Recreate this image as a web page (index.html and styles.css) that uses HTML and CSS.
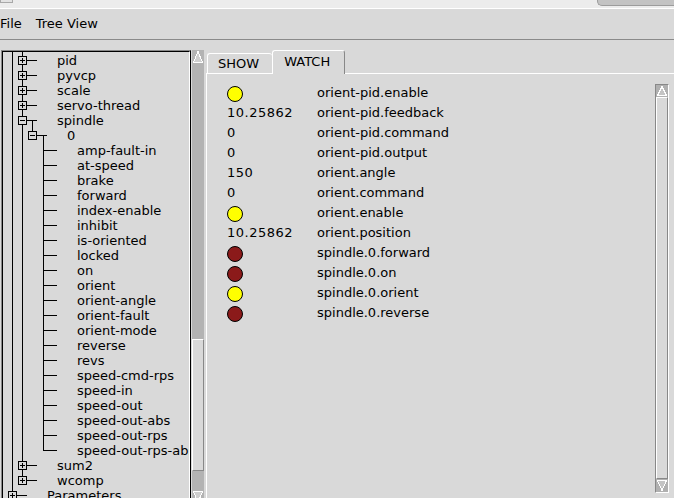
FILE: index.html
```html
<!DOCTYPE html>
<html>
<head>
<meta charset="utf-8">
<title>HAL Show</title>
<link rel="stylesheet" href="styles.css">
</head>
<body>
<svg class="defs" width="0" height="0" aria-hidden="true">
  <defs>
    <symbol id="sp" viewBox="0 0 54 1"><path d="M9.5 0V1M19.5 0V1" stroke="#000"/></symbol>
    <symbol id="lv1" viewBox="0 0 54 15">
      <path d="M9.5 0V15M19.5 0V15M24 7.5H34" stroke="#000"/>
      <rect x="15.5" y="3.5" width="8" height="8" fill="#d9d9d9" stroke="#000"/>
      <path d="M17 7.5H22M19.5 5V10" stroke="#000"/>
    </symbol>
    <symbol id="lv1last" viewBox="0 0 54 15">
      <path d="M9.5 0V15M19.5 0V7.5M24 7.5H34" stroke="#000"/>
      <rect x="15.5" y="3.5" width="8" height="8" fill="#d9d9d9" stroke="#000"/>
      <path d="M17 7.5H22M19.5 5V10" stroke="#000"/>
    </symbol>
    <symbol id="spin" viewBox="0 0 54 15">
      <path d="M9.5 0V15M19.5 0V15M24 7.5H34M29.5 7.5V15" stroke="#000"/>
      <rect x="15.5" y="3.5" width="8" height="8" fill="#d9d9d9" stroke="#000"/>
      <path d="M17 7.5H22" stroke="#000"/>
    </symbol>
    <symbol id="zero" viewBox="0 0 64 15">
      <path d="M9.5 0V15M19.5 0V15M29.5 0V4M34 7.5H44M40.5 7.5V15" stroke="#000"/>
      <rect x="25.5" y="3.5" width="8" height="8" fill="#d9d9d9" stroke="#000"/>
      <path d="M27 7.5H32" stroke="#000"/>
    </symbol>
    <symbol id="leaf" viewBox="0 0 74 15">
      <path d="M9.5 0V15M19.5 0V15M40.5 0V15M41 7.5H54" stroke="#000"/>
    </symbol>
    <symbol id="leaflast" viewBox="0 0 74 15">
      <path d="M9.5 0V15M19.5 0V15M40.5 0V8M41 7.5H54" stroke="#000"/>
    </symbol>
    <symbol id="param" viewBox="0 0 44 15">
      <path d="M9.5 0V4M14 7.5H24" stroke="#000"/>
      <rect x="5.5" y="3.5" width="8" height="8" fill="#d9d9d9" stroke="#000"/>
      <path d="M7 7.5H12M9.5 5V10" stroke="#000"/>
    </symbol>
  </defs>
</svg>
<div class="app">
  <div class="titlebar"><span class="tb-box"></span><span class="tb-tab"></span></div>
  <div class="menubar">
    <span class="menu-item">File</span>
    <span class="menu-item">Tree View</span>
  </div>
  <div class="main">
    <div class="treebox">
      <div class="tree">
        <div class="row spacer"><svg class="g1 sp" viewBox="0 0 54 1"><use href="#sp"/></svg></div>
        <div class="row"><svg class="g1" viewBox="0 0 54 15"><use href="#lv1"/></svg><span>pid</span></div>
        <div class="row"><svg class="g1" viewBox="0 0 54 15"><use href="#lv1"/></svg><span>pyvcp</span></div>
        <div class="row"><svg class="g1" viewBox="0 0 54 15"><use href="#lv1"/></svg><span>scale</span></div>
        <div class="row"><svg class="g1" viewBox="0 0 54 15"><use href="#lv1"/></svg><span>servo-thread</span></div>
        <div class="row"><svg class="g1" viewBox="0 0 54 15"><use href="#spin"/></svg><span>spindle</span></div>
        <div class="row"><svg class="g2" viewBox="0 0 64 15"><use href="#zero"/></svg><span>0</span></div>
        <div class="row"><svg class="g3" viewBox="0 0 74 15"><use href="#leaf"/></svg><span>amp-fault-in</span></div>
        <div class="row"><svg class="g3" viewBox="0 0 74 15"><use href="#leaf"/></svg><span>at-speed</span></div>
        <div class="row"><svg class="g3" viewBox="0 0 74 15"><use href="#leaf"/></svg><span>brake</span></div>
        <div class="row"><svg class="g3" viewBox="0 0 74 15"><use href="#leaf"/></svg><span>forward</span></div>
        <div class="row"><svg class="g3" viewBox="0 0 74 15"><use href="#leaf"/></svg><span>index-enable</span></div>
        <div class="row"><svg class="g3" viewBox="0 0 74 15"><use href="#leaf"/></svg><span>inhibit</span></div>
        <div class="row"><svg class="g3" viewBox="0 0 74 15"><use href="#leaf"/></svg><span>is-oriented</span></div>
        <div class="row"><svg class="g3" viewBox="0 0 74 15"><use href="#leaf"/></svg><span>locked</span></div>
        <div class="row"><svg class="g3" viewBox="0 0 74 15"><use href="#leaf"/></svg><span>on</span></div>
        <div class="row"><svg class="g3" viewBox="0 0 74 15"><use href="#leaf"/></svg><span>orient</span></div>
        <div class="row"><svg class="g3" viewBox="0 0 74 15"><use href="#leaf"/></svg><span>orient-angle</span></div>
        <div class="row"><svg class="g3" viewBox="0 0 74 15"><use href="#leaf"/></svg><span>orient-fault</span></div>
        <div class="row"><svg class="g3" viewBox="0 0 74 15"><use href="#leaf"/></svg><span>orient-mode</span></div>
        <div class="row"><svg class="g3" viewBox="0 0 74 15"><use href="#leaf"/></svg><span>reverse</span></div>
        <div class="row"><svg class="g3" viewBox="0 0 74 15"><use href="#leaf"/></svg><span>revs</span></div>
        <div class="row"><svg class="g3" viewBox="0 0 74 15"><use href="#leaf"/></svg><span>speed-cmd-rps</span></div>
        <div class="row"><svg class="g3" viewBox="0 0 74 15"><use href="#leaf"/></svg><span>speed-in</span></div>
        <div class="row"><svg class="g3" viewBox="0 0 74 15"><use href="#leaf"/></svg><span>speed-out</span></div>
        <div class="row"><svg class="g3" viewBox="0 0 74 15"><use href="#leaf"/></svg><span>speed-out-abs</span></div>
        <div class="row"><svg class="g3" viewBox="0 0 74 15"><use href="#leaf"/></svg><span>speed-out-rps</span></div>
        <div class="row"><svg class="g3" viewBox="0 0 74 15"><use href="#leaflast"/></svg><span>speed-out-rps-abs</span></div>
        <div class="row"><svg class="g1" viewBox="0 0 54 15"><use href="#lv1"/></svg><span>sum2</span></div>
        <div class="row"><svg class="g1" viewBox="0 0 54 15"><use href="#lv1last"/></svg><span>wcomp</span></div>
        <div class="row"><svg class="g0" viewBox="0 0 44 15"><use href="#param"/></svg><span>Parameters</span></div>
      </div>
    </div>
    <div class="tscroll">
      <svg class="tarrow" viewBox="0 0 12 14"><polygon points="6,1.5 10.5,12.5 1.5,12.5" fill="#cfcfcf" stroke="#fff"/></svg>
      <div class="tgap1"></div>
      <div class="tslider"></div>
      <div class="tgap2"></div>
      <svg class="tarrow" viewBox="0 0 12 14"><polygon points="1.5,1.5 10.5,1.5 6,12.5" fill="#cfcfcf" stroke="#fff"/></svg>
    </div>
    <div class="notebook">
      <div class="tabs">
        <div class="tab">SHOW</div>
        <div class="tab active">WATCH</div>
      </div>
      <div class="panel">
        <div class="wlist">
          <div class="wrow"><span class="val"><span class="led y"></span></span><span class="name">orient-pid.enable</span></div>
          <div class="wrow"><span class="val">10.25862</span><span class="name">orient-pid.feedback</span></div>
          <div class="wrow"><span class="val">0</span><span class="name">orient-pid.command</span></div>
          <div class="wrow"><span class="val">0</span><span class="name">orient-pid.output</span></div>
          <div class="wrow"><span class="val">150</span><span class="name">orient.angle</span></div>
          <div class="wrow"><span class="val">0</span><span class="name">orient.command</span></div>
          <div class="wrow"><span class="val"><span class="led y"></span></span><span class="name">orient.enable</span></div>
          <div class="wrow"><span class="val">10.25862</span><span class="name">orient.position</span></div>
          <div class="wrow"><span class="val"><span class="led r"></span></span><span class="name">spindle.0.forward</span></div>
          <div class="wrow"><span class="val"><span class="led r"></span></span><span class="name">spindle.0.on</span></div>
          <div class="wrow"><span class="val"><span class="led y"></span></span><span class="name">spindle.0.orient</span></div>
          <div class="wrow"><span class="val"><span class="led r"></span></span><span class="name">spindle.0.reverse</span></div>
        </div>
        <div class="pscroll">
          <svg class="parrow up" viewBox="0 0 12 12"><polygon points="6,1.5 10.5,10.5 1.5,10.5" fill="#c4c4c4" stroke="#fff"/></svg>
          <div class="pslider"></div>
          <svg class="parrow down" viewBox="0 0 12 13"><polygon points="1.5,1.5 10.5,1.5 6,11.5" fill="#c4c4c4" stroke="#fff"/></svg>
        </div>
      </div>
    </div>
  </div>
</div>
</body>
</html>
```

FILE: styles.css
```css
* { box-sizing: border-box; }
html, body { margin: 0; padding: 0; }
body {
  background: #d9d9d9;
  font-family: "DejaVu Sans", "Liberation Sans", sans-serif;
  font-size: 13px;
  color: #000;
}
.defs { display: block; width: 0; height: 0; overflow: hidden; }
.app {
  width: 674px;
  height: 498px;
  overflow: hidden;
  display: flex;
  flex-direction: column;
}

/* window title strip */
.titlebar {
  flex: none;
  height: 8px;
  background: #ececec;
  display: flex;
  justify-content: space-between;
  align-items: flex-start;
}
.tb-box {
  width: 13px;
  height: 3px;
  background: #e2e2e2;
  border: 1px solid #a8a8a8;
  border-top: none;
}
.tb-tab {
  width: 77px;
  height: 6px;
  background: #c3c3c3;
  border-left: 1px solid #9c9c9c;
  border-bottom: 1px solid #9c9c9c;
  border-bottom-left-radius: 5px;
}

/* menu bar */
.menubar {
  flex: none;
  height: 32px;
  padding-bottom: 2px;
  border-top: 1px solid #fff;
  border-bottom: 1px solid #8a8a8a;
  display: flex;
  align-items: center;
  gap: 14px;
  line-height: 15px;
}

/* main area */
.main {
  flex: 1;
  min-height: 0;
  display: flex;
  padding-top: 10px;
}

/* tree */
.treebox {
  flex: none;
  width: 190px;
  margin-left: 1px;
  border: 1px solid;
  border-color: #888 #000 transparent #888;
  border-bottom: none;
}
.tree {
  height: 100%;
  overflow: hidden;
  border: 1px solid;
  border-color: #000 #fff transparent #000;
  border-bottom: none;
}
.row {
  display: flex;
  height: 15px;
  line-height: 15px;
  white-space: nowrap;
}
.row.spacer { height: 1px; }
.row svg { flex: none; height: 15px; display: block; shape-rendering: crispEdges; overflow: visible; }
.row svg.sp { height: 1px; }
.g0 { width: 44px; }
.g1 { width: 54px; }
.g2 { width: 64px; }
.g3 { width: 74px; }

/* tree scrollbar */
.tscroll {
  flex: none;
  width: 12px;
  margin-left: 1px;
  background: #b3b3b3;
  display: flex;
  flex-direction: column;
}
.tarrow { flex: none; width: 12px; height: 14px; display: block; shape-rendering: crispEdges; }
.tgap1 { flex: none; height: 275px; }
.tslider {
  flex: none;
  height: 132px;
  background: #d9d9d9;
  border: 1px solid;
  border-color: #fff #888 #888 #fff;
}
.tgap2 { flex: none; height: 19px; }

/* notebook */
.notebook {
  flex: 1;
  min-width: 0;
  margin-left: 2px;
  display: flex;
  flex-direction: column;
}
.tabs {
  flex: none;
  height: 23px;
  padding-left: 1px;
  display: flex;
  align-items: flex-end;
}
.tab {
  height: 20px;
  padding: 2px 13px 0 10px;
  line-height: 15px;
  border-top: 1px solid #fff;
  border-left: 1px solid #fff;
  border-radius: 3px 3px 0 0;
  white-space: nowrap;
}
.tab.active {
  height: 24px;
  margin-bottom: -1px;
  padding: 3px 14px 0 11px;
  border-right: 1px solid #888;
  background: #d9d9d9;
  position: relative;
  z-index: 1;
}
.panel {
  flex: 1;
  min-height: 0;
  display: flex;
  border-top: 1px solid #fff;
  border-left: 1px solid #fff;
}
.wlist {
  flex: 1;
  padding: 9px 0 0 20px;
}
.wrow {
  display: flex;
  height: 20px;
  line-height: 20px;
  white-space: nowrap;
}
.val { flex: none; width: 90px; letter-spacing: 0.5px; }
.led {
  display: block;
  width: 16px;
  height: 16px;
  margin-top: 3px;
  border-radius: 50%;
  border: 1px solid #000;
}
.led.y { background: #ffff00; }
.led.r { background: #8b1a1a; }

/* panel scrollbar */
.pscroll {
  flex: none;
  width: 14px;
  margin: 10px 5px 5px 0;
  border: 1px solid;
  border-color: #888 #fff #fff #888;
  display: flex;
  flex-direction: column;
}
.parrow { flex: none; display: block; width: 12px; background: #b0b0b0; shape-rendering: crispEdges; }
.parrow.up { height: 12px; }
.parrow.down { height: 13px; }
.pslider {
  flex: 1;
  background: #d9d9d9;
  border: 1px solid;
  border-color: #fff #888 #888 #fff;
}
```
